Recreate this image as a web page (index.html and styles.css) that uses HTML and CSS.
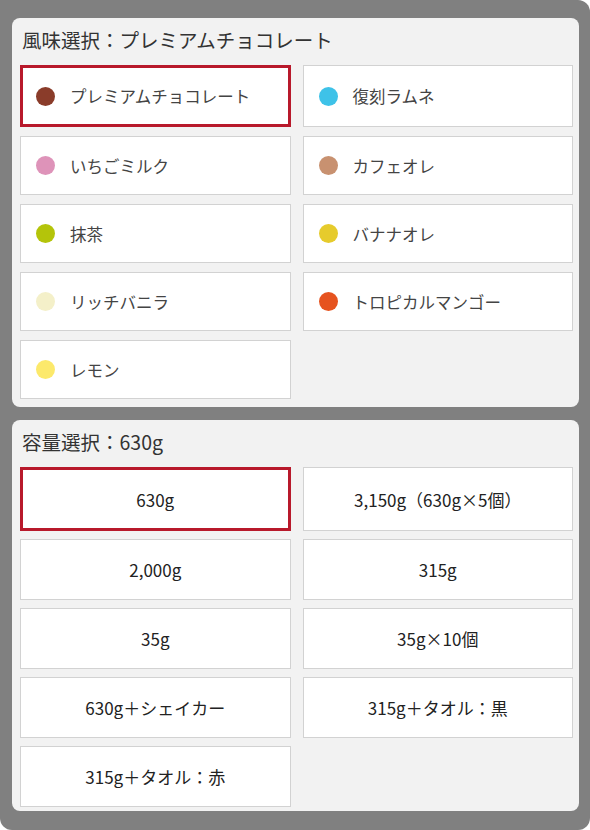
FILE: index.html
```html
<!DOCTYPE html>
<html lang="ja">
<head>
    <meta charset="UTF-8">
    <meta name="viewport" content="width=device-width, initial-scale=1.0">
    <title>風味・容量選択</title>
    <link rel="stylesheet" href="styles.css">
</head>
<body>
    <div class="frame">

        <!-- 風味 -->
        <div class="panel flavors">
            <div class="panel-title">風味選択：プレミアムチョコレート</div>
            <div class="choices">
                <div class="choice is-selected"><span class="dot" style="background:#8a3c2a"></span>プレミアムチョコレート</div>
                <div class="choice"><span class="dot" style="background:#3ec2e8"></span>復刻ラムネ</div>
                <div class="choice"><span class="dot" style="background:#de93b9"></span>いちごミルク</div>
                <div class="choice"><span class="dot" style="background:#c89170"></span>カフェオレ</div>
                <div class="choice"><span class="dot" style="background:#b4c40a"></span>抹茶</div>
                <div class="choice"><span class="dot" style="background:#e6cb2c"></span>バナナオレ</div>
                <div class="choice"><span class="dot" style="background:#f4f0c9"></span>リッチバニラ</div>
                <div class="choice"><span class="dot" style="background:#e6531f"></span>トロピカルマンゴー</div>
                <div class="choice"><span class="dot" style="background:#fce96b"></span>レモン</div>
            </div>
        </div>

        <!-- 容量 -->
        <div class="panel sizes">
            <div class="panel-title">容量選択：630g</div>
            <div class="choices">
                <div class="choice is-selected">630g</div>
                <div class="choice">3,150g（630g×5個）</div>
                <div class="choice">2,000g</div>
                <div class="choice">315g</div>
                <div class="choice">35g</div>
                <div class="choice">35g×10個</div>
                <div class="choice">630g＋シェイカー</div>
                <div class="choice">315g＋タオル：黒</div>
                <div class="choice">315g＋タオル：赤</div>
            </div>
        </div>

    </div>
</body>
</html>
```

FILE: styles.css
```css
body{
    margin: 0;
    background-color: #fff;
    font-family: "Noto Sans CJK JP", "Noto Sans", sans-serif;
    color: #333;
}
.frame{
    background-color: #808080;
    min-height: 830px;
    box-sizing: border-box;
    padding: 18px 11px 18px 12px;
    border-radius: 0 12px 12px 12px;
    display: flex;
    flex-direction: column;
    gap: 13px;
}
.panel{
    background-color: #f2f2f2;
    border-radius: 8px;
    padding: 9px 6px 8px 8px;
}
.panel-title{
    font-size: 19.5px;
    line-height: 26px;
    padding-left: 2px;
    margin-bottom: 12px;
    color: #333;
}
.choices{
    display: grid;
    grid-template-columns: 1fr 1fr;
    column-gap: 12px;
    row-gap: 9px;
}
.choice{
    box-sizing: border-box;
    min-height: 59px;
    background-color: #fff;
    border: 1px solid #d2d2d2;
    display: flex;
    align-items: center;
    padding-left: 15px;
    font-size: 16.5px;
    color: #444;
}
.choice.is-selected{
    min-height: 62px;
    border: 3px solid #b8192b;
    padding-left: 13px;
}
.dot{
    width: 19px;
    height: 19px;
    border-radius: 50%;
    margin-right: 15px;
    flex-shrink: 0;
}

/* 容量 */
.sizes{
    padding-bottom: 4px;
}
.sizes .choices{
    row-gap: 8px;
}
.sizes .choice{
    min-height: 61px;
    justify-content: center;
    padding-left: 0;
    font-size: 17px;
    color: #222;
}
.sizes .choice.is-selected{
    min-height: 64px;
}
```
